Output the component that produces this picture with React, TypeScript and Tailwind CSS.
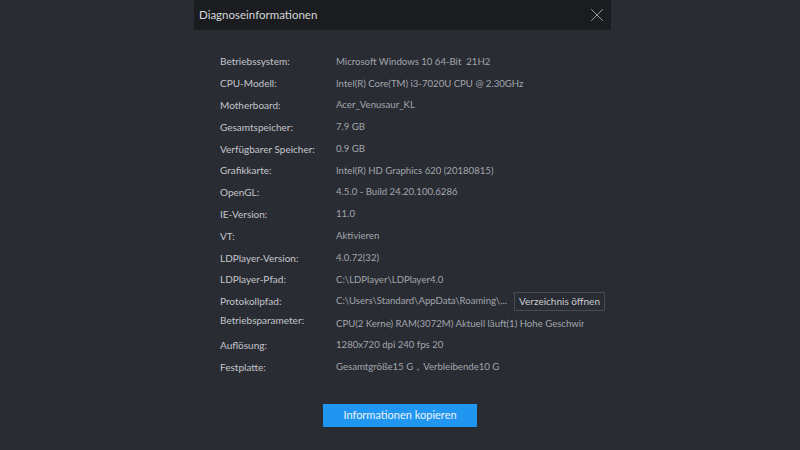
import { X } from "lucide-react";

const rows: [string, string][] = [
  ["Betriebssystem:", "Microsoft Windows 10 64-Bit  21H2"],
  ["CPU-Modell:", "Intel(R) Core(TM) i3-7020U CPU @ 2.30GHz"],
  ["Motherboard:", "Acer_Venusaur_KL"],
  ["Gesamtspeicher:", "7.9 GB"],
  ["Verfügbarer Speicher:", "0.9 GB"],
  ["Grafikkarte:", "Intel(R) HD Graphics 620 (20180815)"],
  ["OpenGL:", "4.5.0 - Build 24.20.100.6286"],
  ["IE-Version:", "11.0"],
  ["VT:", "Aktivieren"],
  ["LDPlayer-Version:", "4.0.72(32)"],
  ["LDPlayer-Pfad:", "C:\\LDPlayer\\LDPlayer4.0"],
];

const tail: [string, string][] = [
  ["Auflösung:", "1280x720 dpi 240 fps 20"],
  ["Festplatte:", "Gesamtgröße15 G，Verbleibende10 G"],
];

function Row({ label, value }: { label: string; value: string }) {
  return (
    <div className="flex h-[21.8px] items-center">
      <span className="w-[116px] shrink-0 text-[#c4c6cc]">{label}</span>
      <span className="whitespace-pre text-[9.6px] text-[#a3a6ad]">{value}</span>
    </div>
  );
}

export default function App() {
  return (
    <div
      className="h-[450px] w-[800px] overflow-hidden bg-[#292c33] text-[10px]"
      style={{ fontFamily: 'Lato, "Noto Sans", sans-serif' }}
    >
      <div className="ml-[194px] h-full w-[417px]">
        <div className="flex h-[30px] items-center justify-between bg-[#1b1c20] pl-[5px] pr-[3px]">
          <span className="text-[11.5px] text-[#d6d7da]">Diagnoseinformationen</span>
          <X className="h-[22px] w-[22px] text-[#a4a6ab]" strokeWidth={1} />
        </div>

        <div className="pl-[26px] pt-[21px]">
          {rows.map(([l, v]) => (
            <Row key={l} label={l} value={v} />
          ))}

          <div className="flex h-[21.8px] items-center">
            <span className="w-[116px] shrink-0 text-[#c4c6cc]">Protokollpfad:</span>
            <span className="w-[178px] shrink-0 whitespace-nowrap text-[9.6px] text-[#a3a6ad]">
              C:\Users\Standard\AppData\Roaming\...
            </span>
            <span className="flex h-[19px] w-[91px] shrink-0 items-center justify-center whitespace-nowrap border border-[#484b53] text-[10px] text-[#c9cbd0]">
              Verzeichnis öffnen
            </span>
          </div>

          <div className="flex h-[22px]">
            <span className="w-[116px] shrink-0 text-[#c4c6cc]">Betriebsparameter:</span>
            <span className="w-[248px] overflow-hidden whitespace-nowrap pt-[4px] text-[9.6px] text-[#a3a6ad]">
              CPU(2 Kerne) RAM(3072M) Aktuell läuft(1) Hohe Geschwindigkeit
            </span>
          </div>

          {tail.map(([l, v]) => (
            <Row key={l} label={l} value={v} />
          ))}
        </div>

        <div className="mt-[26px] flex justify-center pr-[5px]">
          <button className="h-[23px] w-[154px] bg-[#2196f0] text-[11px] text-[#eaf4fd]">
            Informationen kopieren
          </button>
        </div>
      </div>
    </div>
  );
}
